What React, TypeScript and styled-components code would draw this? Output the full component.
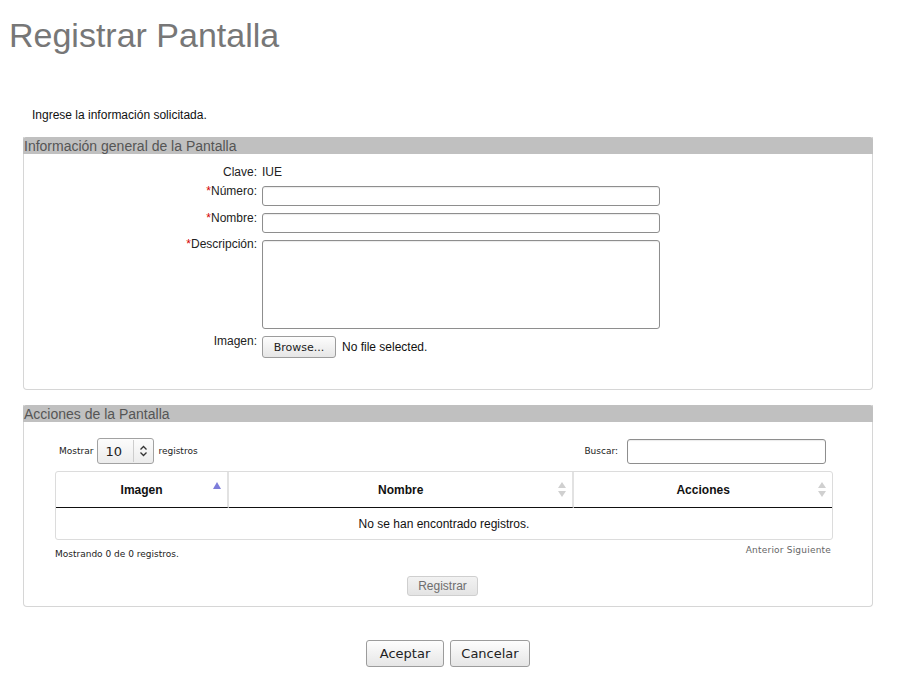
import styled, { createGlobalStyle } from "styled-components";

const GlobalStyle = createGlobalStyle`
  body {
    margin: 0;
    background: #fff;
    color: #222;
    font-family: "Liberation Sans", Arial, sans-serif;
  }
`;

const Page = styled.div`
  width: 899px;
  padding: 15px 0 24px;
`;

const Title = styled.h1`
  margin: 0 0 0 9px;
  font: normal 34px/40px "Liberation Sans", Arial, sans-serif;
  color: #777;
`;

const Intro = styled.p`
  margin: 53px 0 15px 32px;
  font-size: 12px;
  line-height: 14px;
  color: #111;
`;

const Fieldset = styled.section`
  width: 848px;
  margin: 0 0 15px 23px;
  border: 1px solid #d6d6d6;
  border-top: none;
  border-radius: 0 0 4px 4px;
`;

const Legend = styled.div`
  margin: 0 -1px;
  height: 15px;
  padding: 2px 0 0 1px;
  background: #c0c0c0;
  border-radius: 3px 3px 0 0;
  font-size: 14px;
  line-height: 15px;
  color: #555;
`;

const FormGrid = styled.div`
  display: grid;
  grid-template-columns: 233px 398px;
  column-gap: 5px;
  row-gap: 7px;
  align-items: start;
  padding: 13px 0 31px;
  font-size: 12px;
  line-height: 14px;
`;

const Label = styled.div<{ $shift?: number }>`
  text-align: right;
  color: #222;
  margin-top: ${(p) => p.$shift ?? -2}px;
`;

const Req = styled.span`
  color: #d40000;
`;

const Value = styled.div`
  color: #222;
  margin-top: -2px;
`;

const TextInput = styled.input`
  box-sizing: border-box;
  width: ${(p) => p.width ?? 398}px;
  height: ${(p) => p.height ?? 20}px;
  margin: 0;
  border: 1px solid #8e8e8e;
  border-radius: 3px;
  background: #fff;
  box-shadow: inset 0 1px 1px rgba(0, 0, 0, 0.08);
  outline: none;
`;

const TextArea = styled.textarea`
  box-sizing: border-box;
  display: block;
  width: 398px;
  height: 89px;
  margin: 0;
  border: 1px solid #8e8e8e;
  border-radius: 3px;
  box-shadow: inset 0 1px 1px rgba(0, 0, 0, 0.08);
  resize: none;
  outline: none;
`;

const FileRow = styled.div`
  display: flex;
  align-items: center;
  gap: 6px;
  font-size: 12px;
  color: #111;
`;

const Button = styled.button<{ $w: number; $h: number; $size: number }>`
  box-sizing: border-box;
  width: ${(p) => p.$w}px;
  height: ${(p) => p.$h}px;
  padding: 0;
  border: 1px solid #9c9c9c;
  border-radius: 3px;
  background: linear-gradient(#fdfdfd, #e6e6e6);
  font-family: "DejaVu Sans", Verdana, sans-serif;
  font-size: ${(p) => p.$size}px;
  color: #222;
`;

const DisabledButton = styled.button`
  box-sizing: border-box;
  width: 71px;
  height: 20px;
  padding: 0;
  border: 1px solid #cfcfcf;
  border-radius: 3px;
  background: linear-gradient(#f2f2f2, #e4e4e4);
  font-family: "Liberation Sans", Arial, sans-serif;
  font-size: 12px;
  color: #6e6e6e;
`;

const TableArea = styled.div`
  padding: 16px 39px 10px 31px;
`;

const Controls = styled.div`
  display: flex;
  justify-content: space-between;
  align-items: center;
  height: 26px;
  margin-bottom: 7px;
  font-family: "DejaVu Sans", Verdana, sans-serif;
  font-size: 9px;
  color: #222;
`;

const LengthBox = styled.label`
  display: flex;
  align-items: center;
  gap: 4px;
  padding-left: 4px;
`;

const SelectBox = styled.div`
  box-sizing: border-box;
  display: flex;
  align-items: center;
  width: 57px;
  height: 26px;
  border: 1px solid #a2a2a2;
  border-radius: 3px;
  background: linear-gradient(#fcfcfc, #ececec);
`;

const SelectValue = styled.span`
  width: 28px;
  padding-left: 7px;
  font-size: 13px;
  color: #222;
`;

const SelectArrow = styled.span`
  display: flex;
  align-items: center;
  justify-content: center;
  height: 22px;
  flex: 1;
  border-left: 1px solid #cdcdcd;
`;

const FilterBox = styled.label`
  display: flex;
  align-items: center;
  gap: 9px;
  padding-right: 7px;
`;

const Table = styled.table`
  width: 100%;
  border-collapse: separate;
  border-spacing: 0;
  border: 1px solid #dcdcdc;
  border-radius: 3px;
  font-size: 12px;
`;

const Th = styled.th<{ $w: number; $last?: boolean }>`
  position: relative;
  width: ${(p) => p.$w}px;
  height: 35px;
  padding: 0;
  border-bottom: 1px solid #111;
  border-right: ${(p) => (p.$last ? "none" : "2px solid #e2e2e2")};
  font-weight: bold;
  color: #111;
  text-align: center;
`;

const SortIcon = styled.svg<{ $top: number }>`
  position: absolute;
  right: 6px;
  top: ${(p) => p.$top}px;
`;

const Td = styled.td`
  height: 31px;
  padding: 0;
  text-align: center;
  color: #111;
`;

const InfoRow = styled.div`
  display: flex;
  justify-content: space-between;
  align-items: flex-start;
  height: 36px;
  font-family: "DejaVu Sans", Verdana, sans-serif;
  font-size: 9px;
  line-height: 11px;
`;

const InfoText = styled.span`
  margin-top: 9px;
  color: #222;
`;

const Paging = styled.span`
  margin-top: 5px;
  margin-right: 2px;
  color: #666;
  letter-spacing: 0.2px;
`;

const Centered = styled.div<{ $gap?: number; $nudge?: number }>`
  display: flex;
  justify-content: center;
  gap: ${(p) => p.$gap ?? 0}px;
  padding-right: ${(p) => p.$nudge ?? 0}px;
`;

const Footer = styled(Centered)`
  margin-top: 33px;
`;

function SortBoth() {
  return (
    <SortIcon $top={10} width="8" height="15" viewBox="0 0 8 15">
      <path d="M4 0 L8 6 L0 6 Z" fill="#d0d0d0" />
      <path d="M0 9 L8 9 L4 15 Z" fill="#d0d0d0" />
    </SortIcon>
  );
}

export default function App() {
  return (
    <>
      <GlobalStyle />
      <Page>
        <Title>Registrar Pantalla</Title>
        <Intro>Ingrese la información solicitada.</Intro>

        <Fieldset>
          <Legend>Información general de la Pantalla</Legend>
          <FormGrid>
            <Label $shift={-2}>Clave:</Label>
            <Value>IUE</Value>

            <Label>
              <Req>*</Req>Número:
            </Label>
            <TextInput type="text" />

            <Label>
              <Req>*</Req>Nombre:
            </Label>
            <TextInput type="text" />

            <Label $shift={-3}>
              <Req>*</Req>Descripción:
            </Label>
            <TextArea />

            <Label>Imagen:</Label>
            <FileRow>
              <Button $w={74} $h={22} $size={11}>
                Browse...
              </Button>
              No file selected.
            </FileRow>
          </FormGrid>
        </Fieldset>

        <Fieldset>
          <Legend>Acciones de la Pantalla</Legend>
          <TableArea>
            <Controls>
              <LengthBox>
                Mostrar
                <SelectBox>
                  <SelectValue>10</SelectValue>
                  <SelectArrow>
                    <svg width="9" height="12" viewBox="0 0 9 12">
                      <path
                        d="M1.5 4.5 L4.5 1.5 L7.5 4.5 M1.5 7.5 L4.5 10.5 L7.5 7.5"
                        stroke="#333"
                        strokeWidth="1.3"
                        fill="none"
                      />
                    </svg>
                  </SelectArrow>
                </SelectBox>
                registros
              </LengthBox>
              <FilterBox>
                Buscar:
                <TextInput type="text" width={199} height={25} />
              </FilterBox>
            </Controls>

            <Table>
              <thead>
                <tr>
                  <Th $w={172}>
                    Imagen
                    <SortIcon $top={10} width="8" height="7" viewBox="0 0 8 7">
                      <path d="M4 0 L8 7 L0 7 Z" fill="#7d7dda" />
                    </SortIcon>
                  </Th>
                  <Th $w={345}>
                    Nombre
                    <SortBoth />
                  </Th>
                  <Th $w={259} $last>
                    Acciones
                    <SortBoth />
                  </Th>
                </tr>
              </thead>
              <tbody>
                <tr>
                  <Td colSpan={3}>No se han encontrado registros.</Td>
                </tr>
              </tbody>
            </Table>

            <InfoRow>
              <InfoText>Mostrando 0 de 0 registros.</InfoText>
              <Paging>Anterior Siguiente</Paging>
            </InfoRow>

            <Centered $nudge={3}>
              <DisabledButton disabled>Registrar</DisabledButton>
            </Centered>
          </TableArea>
        </Fieldset>

        <Footer $gap={6} $nudge={3}>
          <Button $w={78} $h={27} $size={13}>
            Aceptar
          </Button>
          <Button $w={80} $h={27} $size={13}>
            Cancelar
          </Button>
        </Footer>
      </Page>
    </>
  );
}
